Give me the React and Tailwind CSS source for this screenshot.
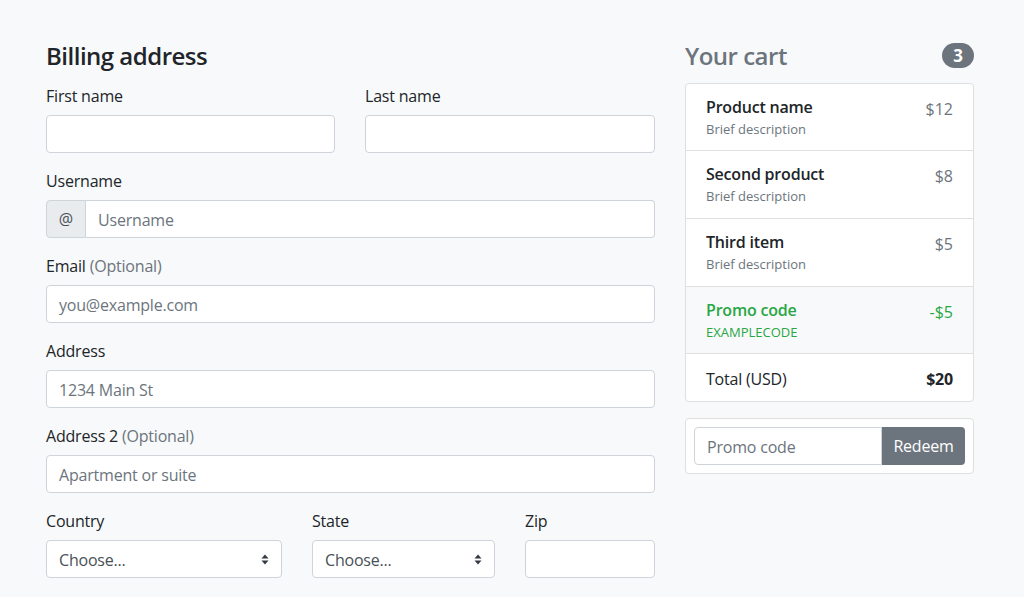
import React from "react";

const font = { fontFamily: '"Open Sans", "Noto Sans", sans-serif' };

function Label({ children, optional }) {
  return (
    <label className="block h-[24px] leading-[24px] mb-[7px] text-[16px] tracking-[-0.2px] text-[#212529]">
      {children}
      {optional && <span className="text-[#6c757d]"> (Optional)</span>}
    </label>
  );
}

function Input({ placeholder, className = "" }) {
  return (
    <div className={"h-[38px] bg-white border border-[#ced4da] rounded-[4px] flex items-center px-[12px] pt-[1px] text-[16px] tracking-[-0.2px] text-[#6c757d] " + className}>
      {placeholder}
    </div>
  );
}

function Select() {
  return (
    <div className="h-[38px] bg-white border border-[#ced4da] rounded-[4px] flex items-center justify-between pl-[12px] pr-[12px] pt-[1px] text-[16px] tracking-[-0.2px] text-[#495057]">
      <span>Choose...</span>
      <svg width="8" height="11" viewBox="0 0 8 11">
        <path d="M4 0.5 L7.5 4.5 L0.5 4.5 Z" fill="#343a40" />
        <path d="M4 10.5 L7.5 6.5 L0.5 6.5 Z" fill="#343a40" />
      </svg>
    </div>
  );
}

function CartItem({ name, desc, price, h, first, promo }) {
  return (
    <li
      className={
        "flex justify-between px-[20px] pt-[11px] " +
        (first ? "" : "border-t border-[#dfdfdf] ") +
        (promo ? "bg-[#f8f9fa] " : "")
      }
      style={{ height: h }}
    >
      <div>
        <div className={"text-[16px] leading-[24px] font-semibold tracking-[-0.2px] " + (promo ? "text-[#28a745]" : "text-[#212529]")}>{name}</div>
        <div className={"text-[13px] leading-[20px] " + (promo ? "text-[#28a745]" : "text-[#6c757d]")}>{desc}</div>
      </div>
      <div className={"text-[16px] leading-[24px] mt-[2px] " + (promo ? "text-[#28a745]" : "text-[#6c757d]")}>{price}</div>
    </li>
  );
}

export default function App() {
  return (
    <div className="min-h-[597px] w-full bg-[#f8f9fa] overflow-hidden" style={font}>
      <div className="flex gap-[30px] pl-[46px] pt-[41px]">
        {/* Left column */}
        <div className="w-[609px]">
          <h4 className="h-[29px] leading-[29px] text-[24px] font-[550] tracking-[-0.5px] text-[#212529] mb-[14px]">Billing address</h4>
          <div className="flex gap-[30px] mb-[16px]">
            <div className="w-[289px]">
              <Label>First name</Label>
              <Input />
            </div>
            <div className="w-[290px]">
              <Label>Last name</Label>
              <Input />
            </div>
          </div>
          <div className="mb-[16px]">
            <Label>Username</Label>
            <div className="flex h-[38px]">
              <div className="w-[40px] bg-[#e9ecef] border border-[#ced4da] rounded-l-[4px] flex items-center justify-center text-[16px] text-[#495057]">@</div>
              <div className="flex-1 bg-white border border-l-0 border-[#ced4da] rounded-r-[4px] flex items-center px-[12px] pt-[1px] text-[16px] tracking-[-0.2px] text-[#6c757d]">Username</div>
            </div>
          </div>
          <div className="mb-[16px]">
            <Label optional>Email</Label>
            <Input placeholder="you@example.com" />
          </div>
          <div className="mb-[16px]">
            <Label>Address</Label>
            <Input placeholder="1234 Main St" />
          </div>
          <div className="mb-[16px]">
            <Label optional>Address 2</Label>
            <Input placeholder="Apartment or suite" />
          </div>
          <div className="flex gap-[30px]">
            <div className="w-[236px]">
              <Label>Country</Label>
              <Select />
            </div>
            <div className="w-[183px]">
              <Label>State</Label>
              <Select />
            </div>
            <div className="w-[130px]">
              <Label>Zip</Label>
              <Input />
            </div>
          </div>
        </div>

        {/* Right column */}
        <div className="w-[289px]">
          <div className="flex items-center justify-between h-[29px] mb-[13px]">
            <h4 className="text-[24px] leading-[29px] font-[550] tracking-[-0.5px] text-[#6c757d]">Your cart</h4>
            <span className="h-[25px] w-[32px] rounded-full bg-[#6c757d] text-white text-[17px] font-bold flex items-center justify-center">3</span>
          </div>
          <ul className="bg-white border border-[#dfdfdf] rounded-[4px] overflow-hidden">
            <CartItem first h={66} name="Product name" desc="Brief description" price="$12" />
            <CartItem h={68} name="Second product" desc="Brief description" price="$8" />
            <CartItem h={68} name="Third item" desc="Brief description" price="$5" />
            <CartItem promo h={67} name="Promo code" desc="EXAMPLECODE" price="-$5" />
            <li className="h-[48px] border-t border-[#dfdfdf] flex items-center justify-between px-[20px] pt-[2px] text-[16px] tracking-[-0.2px] text-[#212529]">
              <span>Total (USD)</span>
              <strong className="font-bold">$20</strong>
            </li>
          </ul>
          <div className="mt-[16px] bg-white border border-[#dfdfdf] rounded-[4px] p-[8px] flex">
            <div className="flex-1 h-[38px] border border-[#ced4da] rounded-l-[4px] flex items-center px-[12px] pt-[1px] text-[16px] tracking-[-0.2px] text-[#6c757d]">Promo code</div>
            <button className="w-[83px] h-[38px] bg-[#6c757d] text-white text-[16px] tracking-[-0.2px] rounded-r-[4px]">Redeem</button>
          </div>
        </div>
      </div>
    </div>
  );
}
